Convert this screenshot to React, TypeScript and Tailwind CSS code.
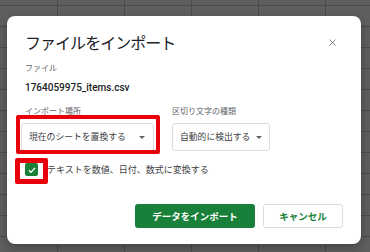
import { X } from 'lucide-react';

const jp = "font-['Noto_Sans_CJK_JP','Noto_Sans',sans-serif]";

function Dropdown({ label, width }: { label: string; width: string }) {
  return (
    <div
      className={`${width} h-[28px] flex items-center justify-between gap-[6px] pl-[7px] pr-[8px] border border-[#dadce0] rounded-[3px] bg-white`}
    >
      <span className="text-[8.8px] text-[#3c4043] leading-none whitespace-nowrap">{label}</span>
      <span className="shrink-0 w-0 h-0 border-l-[3px] border-r-[3px] border-t-[3px] border-l-transparent border-r-transparent border-t-[#5f6368]" />
    </div>
  );
}

export default function App() {
  return (
    <div
      className={`${jp} relative w-[370px] h-[252px] overflow-hidden bg-[#5f5f5f] bg-[linear-gradient(to_right,#4b4b4b_1px,transparent_1px),linear-gradient(to_bottom,#4b4b4b_1px,transparent_1px)] bg-[size:67px_21px] bg-[position:57px_5px] pt-[16px] pl-[7px]`}
    >
      <div className="w-[354px] h-[228px] bg-white rounded-[8px] shadow-[0_4px_12px_rgba(0,0,0,0.3)] px-[18px] pt-[16px]">
        <div className="flex items-center justify-between h-[20px]">
          <h1 className="text-[16px] leading-[20px] text-[#202124] tracking-[-0.06em]">ファイルをインポート</h1>
          <X size={11} strokeWidth={1.6} className="text-[#5f6368] mr-[5px]" />
        </div>

        <div className="mt-[11px] text-[8px] leading-[10px] text-[#5f6368]">ファイル</div>
        <div className="mt-[9px] text-[10px] leading-[12px] font-medium text-[#202124] font-['Roboto',sans-serif]">
          1764059975_items.csv
        </div>

        <div className="mt-[12px] flex gap-[18px]">
          <div className="flex flex-col gap-[7px] -ml-[4px]">
            <span className="text-[8px] leading-[10px] text-[#5f6368] ml-[4px]">インポート場所</span>
            <Dropdown label="現在のシートを置換する" width="w-[133px]" />
          </div>
          <div className="flex flex-col gap-[7px]">
            <span className="text-[8px] leading-[10px] text-[#5f6368]">区切り文字の種類</span>
            <Dropdown label="自動的に検出する" width="w-[98px]" />
          </div>
        </div>

        <div className="mt-[12px] flex items-center gap-[9px] h-[13px]">
          <div className="w-[13px] h-[13px] rounded-[2px] bg-[#188038] flex items-center justify-center">
            <svg viewBox="0 0 12 12" className="w-[10px] h-[10px]">
              <path d="M2.2 6.2 L4.8 8.7 L9.8 3.4" fill="none" stroke="white" strokeWidth="1.6" />
            </svg>
          </div>
          <span className="text-[9px] leading-none text-[#3c4043]">テキストを数値、日付、数式に変換する</span>
        </div>

        <div className="mt-[28px] flex justify-end gap-[8px]">
          <button className="w-[120px] h-[24px] rounded-[3px] bg-[#188038] text-white text-[9.5px] font-bold">
            データをインポート
          </button>
          <button className="w-[80px] h-[24px] rounded-[3px] bg-white border border-[#dadce0] text-[#188038] text-[9.5px] font-bold">
            キャンセル
          </button>
        </div>
      </div>

      <div className="absolute left-[16px] top-[115px] w-[144px] h-[39px] border-[4.5px] border-[#e8000b] rounded-[2px]" />
      <div className="absolute left-[15px] top-[158px] w-[33px] h-[26px] border-[5px] border-[#e8000b] rounded-[2px]" />
    </div>
  );
}
